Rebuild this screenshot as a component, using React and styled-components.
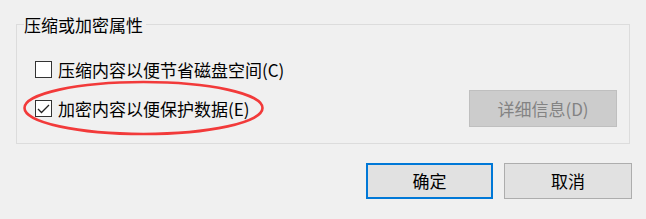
import React from "react";
import styled, { createGlobalStyle } from "styled-components";

const GlobalStyle = createGlobalStyle`
  html, body {
    margin: 0;
    padding: 0;
    background: #f0f0f0;
  }
  body {
    font-family: "Noto Sans CJK SC", "Noto Sans", sans-serif;
    color: #000;
  }
`;

const Dialog = styled.div`
  position: relative;
  width: 646px;
  height: 219px;
  box-sizing: border-box;
  padding: 14px 16px 0 16px;
  background: #f0f0f0;
  font-size: 17px;
`;

const Group = styled.fieldset`
  margin: 0;
  padding: 16px 12px 16px 7px;
  border: 1px solid #dcdcdc;
  min-width: 0;
  display: flex;
  flex-direction: column;
  gap: 2px;
`;

const Legend = styled.legend`
  padding: 0 3px 0 0;
  line-height: 21px;
  height: 21px;
`;

const Row = styled.div`
  display: flex;
  align-items: center;
  justify-content: space-between;
  height: 37px;
  padding-left: 11px;
`;

const CheckLabel = styled.label`
  display: flex;
  align-items: center;
  gap: 6px;
  line-height: 20px;
`;

const Box = styled.span`
  width: 17px;
  height: 17px;
  box-sizing: border-box;
  border: 1px solid #333;
  background: #fff;
  display: flex;
  align-items: center;
  justify-content: center;
`;

const Button = styled.button`
  font-family: inherit;
  font-size: 17px;
  height: ${(p) => p.$h || 36}px;
  width: ${(p) => p.$w}px;
  box-sizing: border-box;
  padding: 0;
  background: ${(p) => (p.disabled ? "#cccccc" : "#e1e1e1")};
  color: ${(p) => (p.disabled ? "#838383" : "#000")};
  border: ${(p) =>
    p.$primary ? "2px solid #0078d7" : p.disabled ? "1px solid #bfbfbf" : "1px solid #adadad"};
  line-height: 20px;
`;

const Footer = styled.div`
  display: flex;
  justify-content: flex-end;
  gap: 11px;
  margin-top: 19px;
  margin-right: -2px;
`;

const Annotation = styled.svg`
  position: absolute;
  left: 0;
  top: 0;
  pointer-events: none;
`;

const Check = ({ checked }) => (
  <Box>
    {checked && (
      <svg width="15" height="15" viewBox="0 0 15 15">
        <path d="M2 8 L5.5 11.5 L13 4" fill="none" stroke="#222" strokeWidth="1.3" />
      </svg>
    )}
  </Box>
);

export default function App() {
  return (
    <>
      <GlobalStyle />
      <Dialog>
        <Group>
          <Legend>压缩或加密属性</Legend>
          <Row>
            <CheckLabel>
              <Check />
              压缩内容以便节省磁盘空间(C)
            </CheckLabel>
          </Row>
          <Row>
            <CheckLabel>
              <Check checked />
              加密内容以便保护数据(E)
            </CheckLabel>
            <Button disabled $w={148} $h={37}>
              详细信息(D)
            </Button>
          </Row>
        </Group>
        <Footer>
          <Button $primary $w={127}>确定</Button>
          <Button $w={128}>取消</Button>
        </Footer>
        <Annotation width="646" height="219">
          <ellipse cx="143.5" cy="108" rx="119" ry="26" fill="none" stroke="#f23a3a" strokeWidth="2.6" />
        </Annotation>
      </Dialog>
    </>
  );
}
